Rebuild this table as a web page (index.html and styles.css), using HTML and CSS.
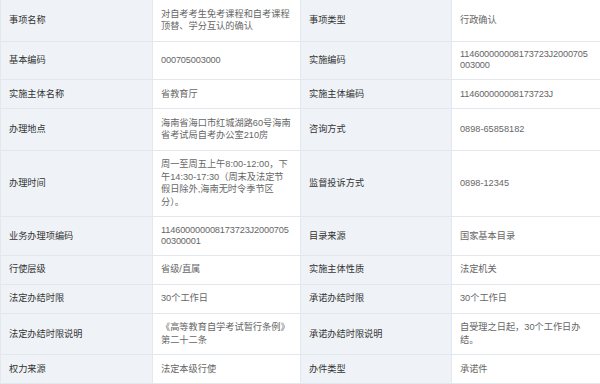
FILE: index.html
```html
<!DOCTYPE html>
<html>
  <head>
    <meta charset="utf-8" />
    <title>事项基本信息</title>
    <link rel="stylesheet" href="styles.css">
  </head>
  <body>
    <div class="table-container">
      <table class="info-table">
        <colgroup>
          <col class="col-label" />
          <col class="col-value" />
          <col class="col-label-2" />
          <col class="col-value-2" />
        </colgroup>
        <tbody>
          <tr>
            <th>事项名称</th>
            <td>对自考考生免考课程和自考课程顶替、学分互认的确认</td>
            <th>事项类型</th>
            <td>行政确认</td>
          </tr>
          <tr>
            <th>基本编码</th>
            <td class="code">000705003000</td>
            <th>实施编码</th>
            <td class="code">114600000008173723J2000705003000</td>
          </tr>
          <tr>
            <th>实施主体名称</th>
            <td>省教育厅</td>
            <th>实施主体编码</th>
            <td class="code">114600000008173723J</td>
          </tr>
          <tr>
            <th>办理地点</th>
            <td>海南省海口市红城湖路60号海南省考试局自考办公室210房</td>
            <th>咨询方式</th>
            <td>0898-65858182</td>
          </tr>
          <tr>
            <th>办理时间</th>
            <td>周一至周五上午8:00-12:00，下午14:30-17:30（周末及法定节假日除外,海南无时令季节区分）。</td>
            <th>监督投诉方式</th>
            <td>0898-12345</td>
          </tr>
          <tr>
            <th>业务办理项编码</th>
            <td class="code">114600000008173723J200070500300001</td>
            <th>目录来源</th>
            <td>国家基本目录</td>
          </tr>
          <tr>
            <th>行使层级</th>
            <td>省级/直属</td>
            <th>实施主体性质</th>
            <td>法定机关</td>
          </tr>
          <tr>
            <th>法定办结时限</th>
            <td>30个工作日</td>
            <th>承诺办结时限</th>
            <td>30个工作日</td>
          </tr>
          <tr>
            <th>法定办结时限说明</th>
            <td>《高等教育自学考试暂行条例》第二十二条</td>
            <th>承诺办结时限说明</th>
            <td>自受理之日起，30个工作日办结。</td>
          </tr>
          <tr>
            <th>权力来源</th>
            <td>法定本级行使</td>
            <th>办件类型</th>
            <td>承诺件</td>
          </tr>
        </tbody>
      </table>
    </div>
  </body>
</html>
```

FILE: styles.css
```css
body {
  margin: 0;
  background-color: #fff;
  font-family: "Liberation Sans", "Noto Sans CJK SC", sans-serif;
  font-size: 9.2px;
}

.table-container {
  width: 600px;
  margin-top: -1px;
}

.info-table {
  width: 600px;
  table-layout: fixed;
  border-collapse: collapse;
}

.col-label {
  width: 152px;
}

.col-value {
  width: 148px;
}

.col-label-2 {
  width: 151px;
}

.col-value-2 {
  width: 149px;
}

.info-table th,
.info-table td {
  padding: 7.75px 8px;
  border: 1px solid #e3e8ee;
  line-height: 12.5px;
  text-align: left;
  vertical-align: middle;
}

.info-table th {
  background-color: #eff3f7;
  color: #333;
  font-weight: normal;
}

.info-table td {
  background-color: #fff;
  color: #666;
}

.info-table td.code {
  line-height: 11px;
  letter-spacing: -0.15px;
  word-break: break-all;
}
```
